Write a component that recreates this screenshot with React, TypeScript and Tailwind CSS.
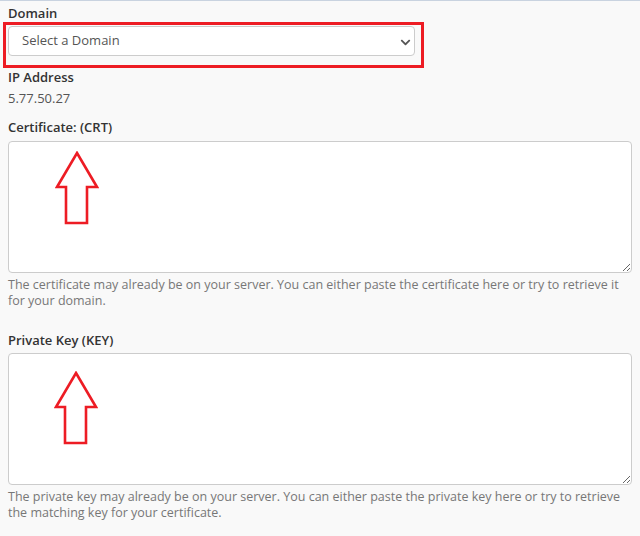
import { FaChevronDown } from 'react-icons/fa';

const font = { fontFamily: '"Open Sans", "Noto Sans", sans-serif' };

const Arrow = ({ className }: { className: string }) => (
  <svg className={className} width="44" height="74" viewBox="0 0 44 74" fill="none">
    <path
      d="M22 2 L42 36 L32 36 L32 72 L11 72 L11 36 L2 36 Z"
      stroke="#ed1c24"
      strokeWidth="2.6"
      strokeLinejoin="miter"
    />
  </svg>
);

const App = () => {
  return (
    <div className="min-h-[536px] w-[640px] bg-[#f9f9f9] border-t border-[#c9d3e0] text-[#333]" style={font}>
      <div className="relative px-2 pt-[3px]">
        <label className="block text-[13px] leading-[18px] font-semibold">Domain</label>
        <div className="relative mt-[4px] w-[407px]">
          <select className="h-[30px] w-full appearance-none rounded-[4px] border border-[#ccc] bg-white pl-[13px] text-[13px] text-[#555] outline-none">
            <option>Select a Domain</option>
          </select>
          <FaChevronDown className="pointer-events-none absolute right-[4px] top-[11px] text-[#555]" size={11} />
        </div>
        <div className="pointer-events-none absolute left-[3px] top-[21px] h-[46px] w-[421px] border-[3px] border-[#ed1c24]" />

        <label className="mt-[12px] block text-[13px] leading-[18px] font-semibold">IP Address</label>
        <div className="mt-[3px] text-[13px] leading-[18px] text-[#555]">5.77.50.27</div>

        <label className="mt-[11px] block text-[13px] leading-[18px] font-semibold">Certificate: (CRT)</label>
        <div className="relative mt-[5px]">
          <textarea className="block h-[132px] w-full resize-y rounded-[4px] border border-[#ccc] bg-white outline-none" />
          <Arrow className="pointer-events-none absolute left-[47px] top-[10px]" />
        </div>
        <p className="mt-[4px] text-[12.5px] leading-[16px] text-[#777]">
          The certificate may already be on your server. You can either paste the certificate here or try to retrieve it for your domain.
        </p>

        <label className="mt-[22px] block text-[13px] leading-[18px] font-semibold">Private Key (KEY)</label>
        <div className="relative mt-[4px]">
          <textarea className="block h-[132px] w-full resize-y rounded-[4px] border border-[#ccc] bg-white outline-none" />
          <Arrow className="pointer-events-none absolute left-[46px] top-[18px]" />
        </div>
        <p className="mt-[4px] text-[12.5px] leading-[16px] text-[#777]">
          The private key may already be on your server. You can either paste the private key here or try to retrieve the matching key for your certificate.
        </p>
      </div>
    </div>
  );
};

export default App;
